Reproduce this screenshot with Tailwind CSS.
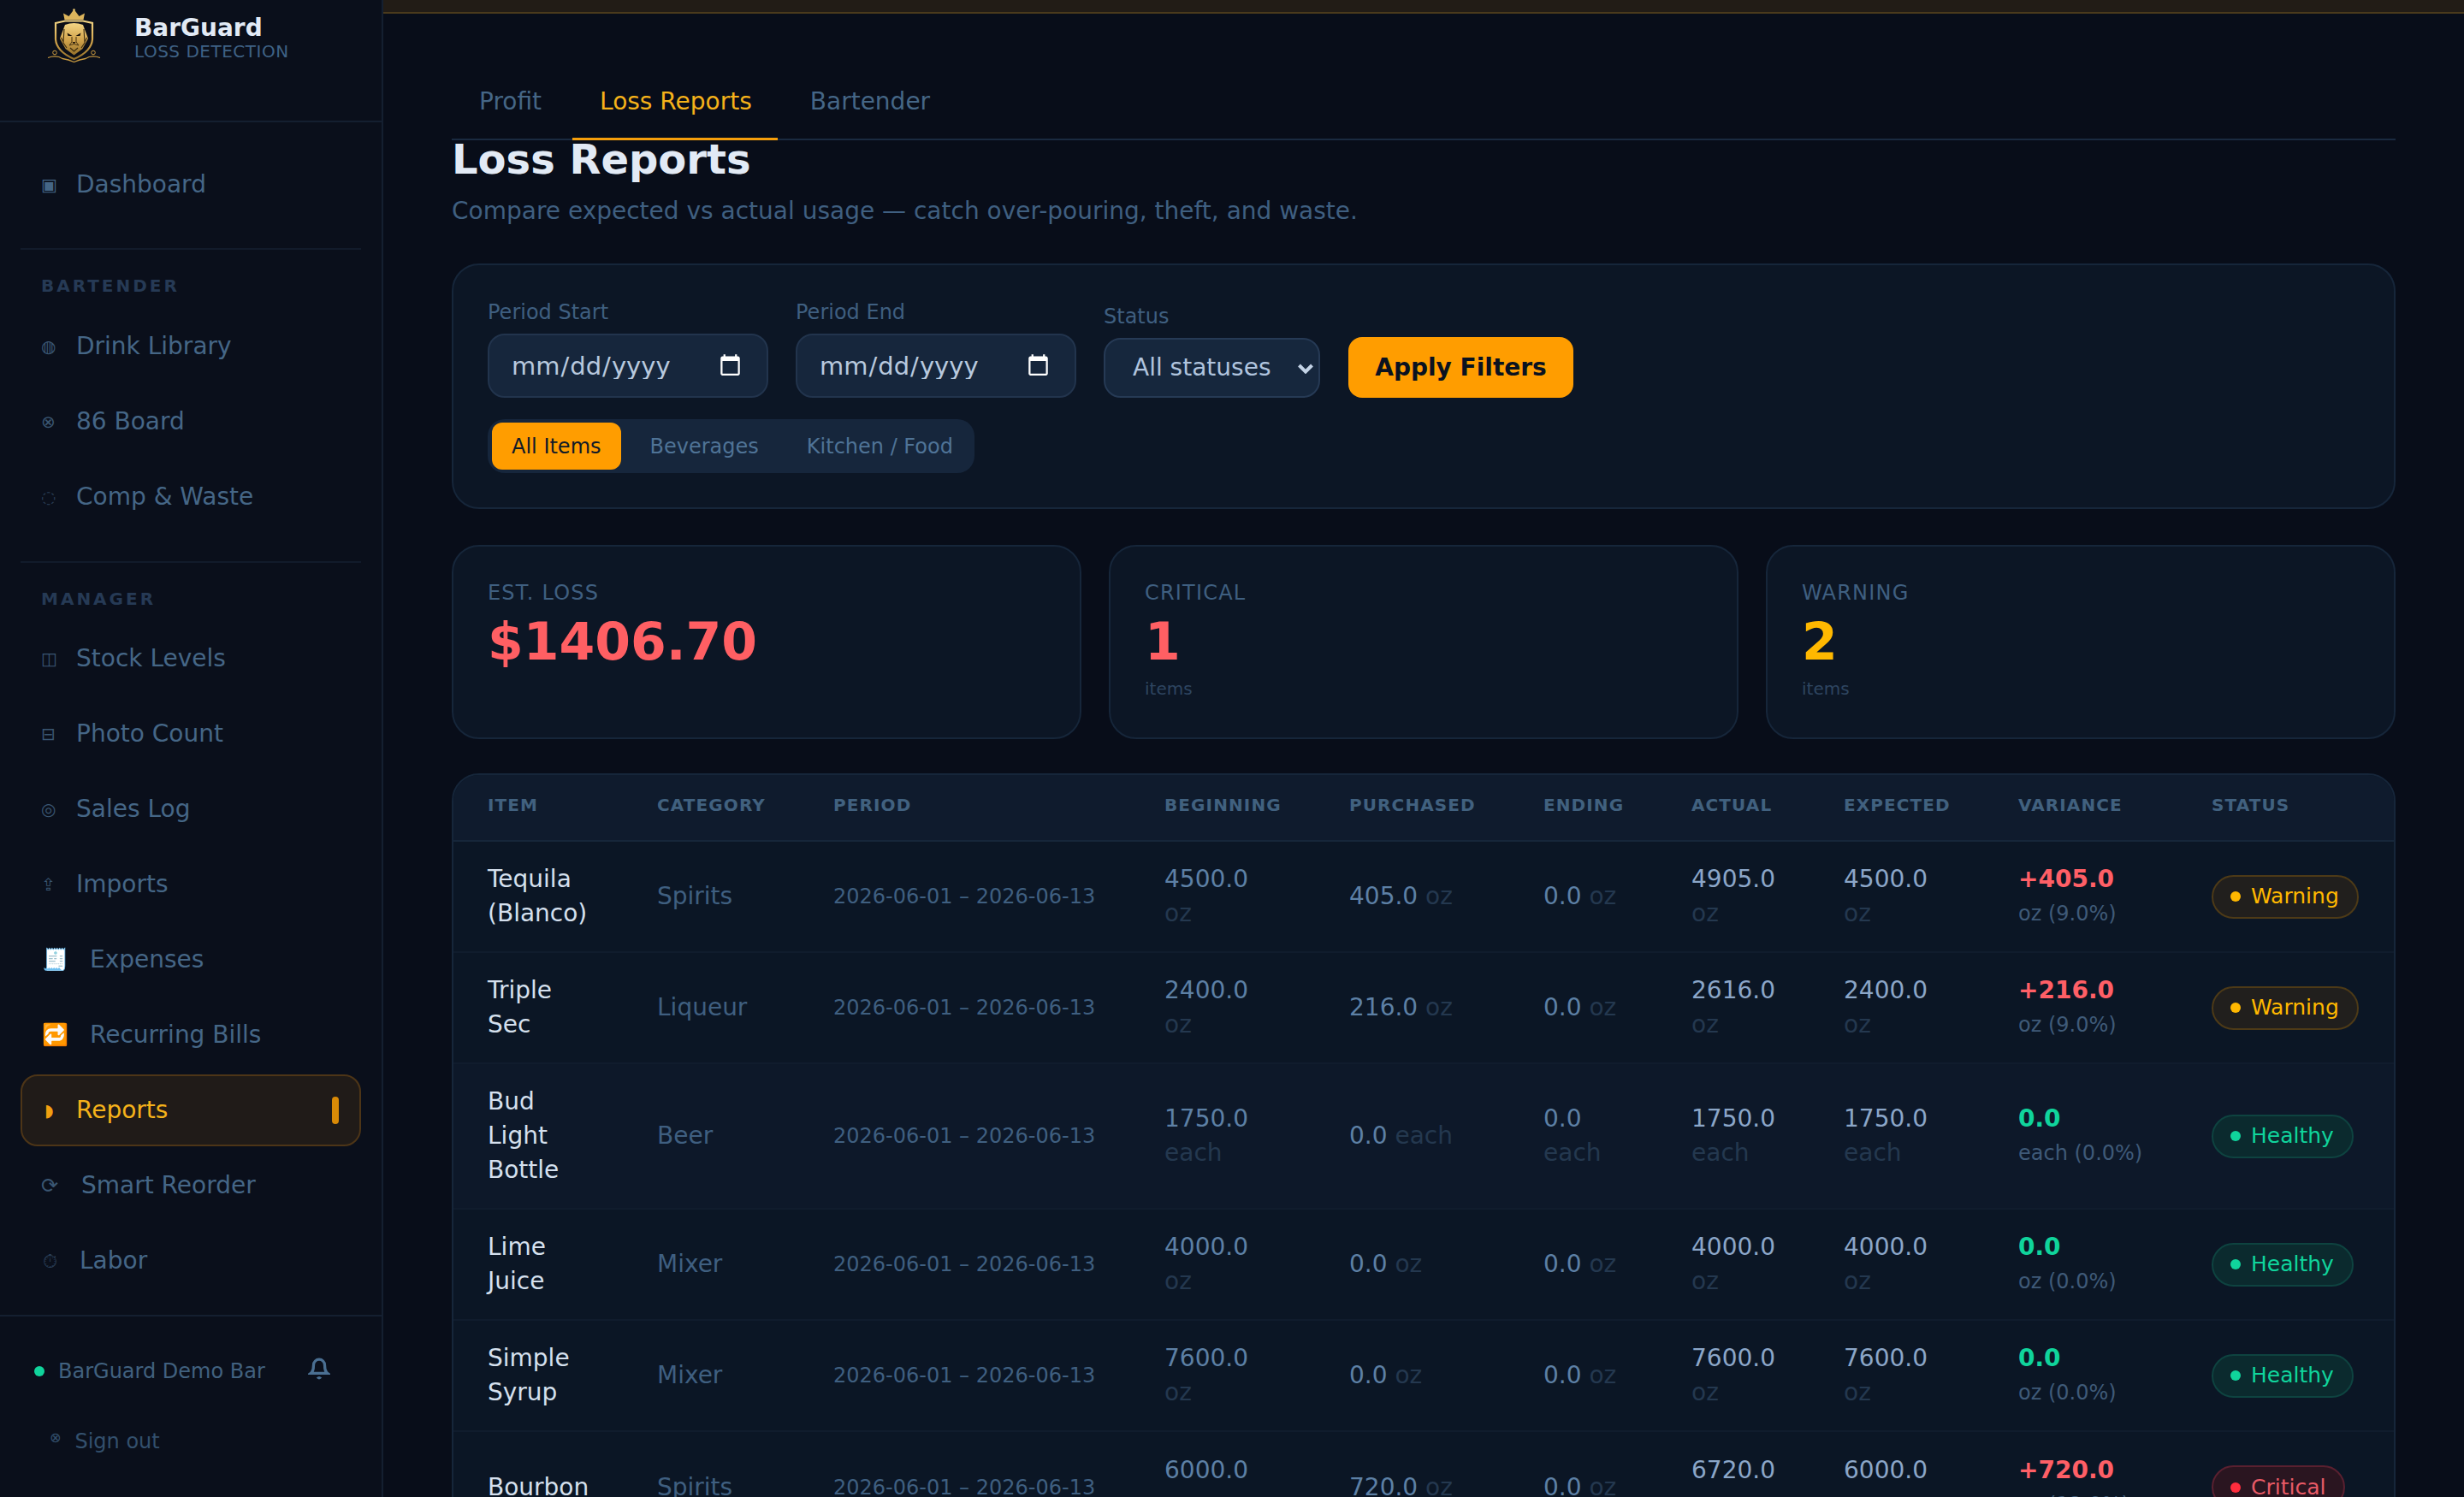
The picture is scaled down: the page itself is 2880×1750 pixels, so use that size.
<!DOCTYPE html>
<html lang="en">
<head>
<meta charset="utf-8">
<title>BarGuard - Loss Reports</title>
<script src="https://cdn.jsdelivr.net/npm/@tailwindcss/browser@4"></script>
</head>
<body class="font-['DejaVu_Sans',sans-serif] bg-[#080d19] text-[#e2eaf5] h-[1750px] w-[2880px] overflow-hidden flex">

<aside class="w-[448px] h-[1750px] shrink-0 bg-[#0a0f1b] border-r-2 border-[#141f30] flex flex-col">
  <div class="h-[143px] border-b-2 border-[#141f30] flex items-start shrink-0">
    <svg class="ml-[55px] mt-[10px] w-[63px] h-[64px] shrink-0" viewBox="55 10 63 64">
      <defs><linearGradient id="g" x1="0" y1="0" x2="0" y2="1"><stop offset="0" stop-color="#f3d584"/><stop offset="0.55" stop-color="#d0a24a"/><stop offset="1" stop-color="#94702a"/></linearGradient></defs>
      <path d="M75.500 23 L74 15.500 L80.500 19 L86.500 11 L92.500 19 L99 15.500 L97.500 23 Z" fill="#dcb45c"/>
      <circle cx="86.500" cy="11.500" r="1.300" fill="#e8c670"/>
      <path d="M65 27 L76 24.500 L97 24.500 L108 27 L108 46 Q107 60 86.500 69 Q66 60 65 46 Z" fill="#0b0e17" stroke="url(#g)" stroke-width="2.200"/>
      <path d="M76 29 Q86.500 25 97 29 L103 45 L96.500 57 L86.500 64.500 L76.500 57 L70 45 Z" fill="url(#g)"/>
      <path d="M75 34 L74 50 L78 56 M98 34 L99 50 L95 56 M71.500 44 L74 49 M101.500 44 L99 49" stroke="#3d2d10" stroke-width="1.100" fill="none"/>
      <path d="M78.500 38.500 L84.500 42 L79.500 42 Z M94.500 38.500 L88.500 42 L93.500 42 Z" fill="#1a1207"/>
      <path d="M84 43 L84 49 L81 53 L86.500 51.500 L92 53 L89 49 L89 43" stroke="#4a3614" stroke-width="1" fill="none"/>
      <path d="M84.500 49 L88.500 49 L86.500 51.500 Z" fill="#1a1207"/>
      <path d="M82 56 L86.500 60 L91 56" stroke="#3d2d10" stroke-width="1.200" fill="none"/>
      <path d="M56 67.500 Q66 64 73 68.500 Q80 69.500 86.500 72.500 Q93 69.500 100 68.500 Q107 64 117 67.500" stroke="#c99a40" stroke-width="1.300" fill="none"/>
      <circle cx="64" cy="61.500" r="2.300" fill="none" stroke="#c99a40" stroke-width="1"/>
      <circle cx="109" cy="61.500" r="2.300" fill="none" stroke="#c99a40" stroke-width="1"/>
    </svg>
    <div class="ml-[39px] pt-[17px] flex flex-col">
      <span class="font-bold text-[28px] leading-[32px] text-[#e2eaf5]">BarGuard</span>
      <span class="text-[20px] leading-[22px] tracking-[0.500px] text-[#3f6285]">LOSS DETECTION</span>
    </div>
  </div>

  <nav class="flex-1 px-[24px] pt-[31px] flex flex-col text-[28px] text-[#456686]">
    <a class="h-[84px] flex items-center gap-[21px] px-[24px] shrink-0"><span class="w-[20px] text-[20px] text-[#456686]">▣</span>Dashboard</a>

    <div class="h-[2px] bg-[#121b2b] mt-[32px] mb-[28px] shrink-0"></div>
    <div class="h-[28px] pl-[24px] text-[20px] leading-[28px] font-bold tracking-[3px] text-[#263a55] mb-[15px] shrink-0">BARTENDER</div>
    <div class="flex flex-col gap-[4px]">
      <a class="h-[84px] flex items-center gap-[21px] px-[24px]"><span class="w-[20px] text-[20px] text-[#3a5672]">◍</span>Drink Library</a>
      <a class="h-[84px] flex items-center gap-[21px] px-[24px]"><span class="w-[20px] text-[20px] text-[#3a5672]">⊗</span>86 Board</a>
      <a class="h-[84px] flex items-center gap-[21px] px-[24px]"><span class="w-[20px] text-[20px] text-[#2a3f58]">◌</span>Comp &amp; Waste</a>
    </div>

    <div class="h-[2px] bg-[#121b2b] mt-[33px] mb-[28px] shrink-0"></div>
    <div class="h-[28px] pl-[24px] text-[20px] leading-[28px] font-bold tracking-[3px] text-[#263a55] mb-[14px] shrink-0">MANAGER</div>
    <div class="flex flex-col gap-[4px]">
      <a class="h-[84px] flex items-center gap-[21px] px-[24px]"><span class="w-[20px] text-[20px] text-[#3a5672]">◫</span>Stock Levels</a>
      <a class="h-[84px] flex items-center gap-[21px] px-[24px]"><span class="w-[20px] text-[20px] text-[#3a5672]">⊟</span>Photo Count</a>
      <a class="h-[84px] flex items-center gap-[21px] px-[24px]"><span class="w-[20px] text-[20px] text-[#3a5672]">◎</span>Sales Log</a>
      <a class="h-[84px] flex items-center gap-[21px] px-[24px]"><span class="w-[20px] text-[20px] text-[#3a5672]">⇪</span>Imports</a>
      <a class="h-[84px] flex items-center gap-[21px] px-[24px]"><span class="w-[36px] pl-[1px] text-[25px]">🧾</span>Expenses</a>
      <a class="h-[84px] flex items-center gap-[21px] px-[24px]"><span class="w-[36px] pl-[1px] text-[25px]">🔁</span>Recurring Bills</a>
      <a class="h-[84px] flex items-center gap-[21px] px-[22px] text-[#f5b21a] bg-[#201b18] border-2 border-[#4d3517] rounded-[20px]"><span class="w-[20px] pl-[4px] text-[20px] text-[#f0a010]">◗</span>Reports<span class="ml-auto w-[8px] h-[32px] rounded-[4px] bg-[#d98a06] mr-[2px]"></span></a>
      <a class="h-[84px] flex items-center gap-[21px] px-[24px]"><span class="w-[26px] text-[24px] text-[#3a5672]">⟳</span>Smart Reorder</a>
      <a class="h-[84px] flex items-center gap-[21px] px-[24px]"><span class="w-[24px] pl-[2px] text-[22px] text-[#2a3f58]">⏱</span>Labor</a>
    </div>
  </nav>

  <div class="h-[213px] border-t-2 border-[#141f30] shrink-0 flex flex-col">
    <div class="flex items-center pl-[40px] pt-[48px] h-[80px] text-[24px] text-[#41617f]">
      <span class="w-[12px] h-[12px] rounded-full bg-[#10d49c]"></span>
      <span class="ml-[16px]">BarGuard Demo Bar</span>
      <svg class="ml-[50px] w-[26px] h-[26px] mt-[-6px]" viewBox="0 0 24 24" fill="none" stroke="#4a6f92" stroke-width="3"><path d="M18 8a6 6 0 0 0-12 0c0 7-3 9-3 9h18s-3-2-3-9"/><path d="M13.700 21a2 2 0 0 1-3.400 0"/></svg>
    </div>
    <div class="flex items-center gap-[16px] pl-[58px] mt-[48px] text-[24px] text-[#33506d]"><span class="text-[16px] -mt-[8px]">⊗</span>Sign out</div>
  </div>
</aside>

<main class="flex-1 min-w-0 flex flex-col h-[1750px] overflow-hidden">
  <div class="h-[16px] shrink-0 bg-[#221c16] border-b-2 border-[#4a3a1c]"></div>
  <div class="px-[80px] pt-[62px] flex flex-col">
    <div class="flex gap-[4px] border-b-2 border-[#1a2a40] h-[86px] text-[28px] text-[#456686]">
      <div class="px-[32px] pt-[20px] h-[86px]">Profit</div>
      <div class="pl-[32px] pr-[30px] pt-[20px] h-[86px] whitespace-nowrap text-[#f5b21a] border-b-[3px] border-[#f59e0b]">Loss Reports</div>
      <div class="pl-[34px] pr-[32px] pt-[20px] h-[86px]">Bartender</div>
    </div>
    <h1 class="text-[48px] leading-[48px] -mt-[2px] font-bold text-[#e2eaf5]">Loss Reports</h1>
    <p class="text-[28px] leading-[40px] mt-[17px] text-[#3f5f80]">Compare expected vs actual usage — catch over-pouring, theft, and waste.</p>

    <section class="mt-[41px] h-[287px] rounded-[32px] border-2 border-[#16263a] bg-[#0c1625] px-[40px] pt-[40px] flex flex-col gap-[25px]">
      <div class="flex items-end gap-[32px] h-[115px] shrink-0">
        <label class="flex flex-col gap-[10px] text-[24px] leading-[30px] text-[#3f5f80]">Period Start
          <input type="date" class="w-[328px] h-[75px] rounded-[20px] bg-[#16263c] border-2 border-[#22344d] pl-[25px] pr-[26px] text-[29px] text-[#b8c9de] [color-scheme:dark]">
        </label>
        <label class="flex flex-col gap-[10px] text-[24px] leading-[30px] text-[#3f5f80]">Period End
          <input type="date" class="w-[328px] h-[75px] rounded-[20px] bg-[#16263c] border-2 border-[#22344d] pl-[25px] pr-[26px] text-[29px] text-[#b8c9de] [color-scheme:dark]">
        </label>
        <label class="flex flex-col gap-[10px] text-[24px] leading-[30px] text-[#3f5f80]">Status
          <span class="relative block w-[253px] h-[70px]">
            <select class="appearance-none w-[253px] h-[70px] rounded-[20px] bg-[#16273d] border-2 border-[#263a55] pl-[32px] text-[28px] text-[#b0c4de]"><option>All statuses</option></select>
            <svg class="absolute left-[227px] top-[30px] w-[18px] h-[12px] pointer-events-none" viewBox="0 0 18 12" fill="none" stroke="#c3d3e6" stroke-width="4"><path d="M1.500 2 L9 9.500 L16.500 2"/></svg>
          </span>
        </label>
        <button class="w-[263px] h-[71px] ml-[1px] rounded-[16px] bg-[#ff9d00] text-[#0a1220] font-bold text-[28px]">Apply Filters</button>
      </div>
      <div class="self-start w-[569px] h-[63px] flex items-center gap-[10px] bg-[#16263c] rounded-[20px] px-[5px] text-[24px] text-[#4f7396] whitespace-nowrap">
        <span class="h-[55px] px-[23px] flex items-center rounded-[12px] bg-[#ff9d00] text-[#101a28]">All Items</span>
        <span class="h-[55px] pl-[24px] pr-[22px] flex items-center">Beverages</span>
        <span class="h-[55px] px-[24px] flex items-center">Kitchen / Food</span>
      </div>
    </section>

    <section class="mt-[42px] grid grid-cols-3 gap-[32px]">
      <div class="h-[227px] rounded-[32px] border-2 border-[#16263a] bg-[#0c1625] px-[40px] pt-[39px]">
        <div class="text-[24px] leading-[30px] tracking-[1.200px] text-[#3f5f80]">EST. LOSS</div>
        <div class="text-[60px] leading-[72px] mt-[6px] font-bold text-[#ff5f63]">$1406.70</div>
      </div>
      <div class="h-[227px] rounded-[32px] border-2 border-[#16263a] bg-[#0c1625] px-[40px] pt-[39px]">
        <div class="text-[24px] leading-[30px] tracking-[1.200px] text-[#3f5f80]">CRITICAL</div>
        <div class="text-[60px] leading-[72px] mt-[6px] font-bold text-[#ff5f63]">1</div>
        <div class="text-[20px] leading-[26px] mt-[6px] text-[#2e4560]">items</div>
      </div>
      <div class="h-[227px] rounded-[32px] border-2 border-[#16263a] bg-[#0c1625] px-[40px] pt-[39px]">
        <div class="text-[24px] leading-[30px] tracking-[1.200px] text-[#3f5f80]">WARNING</div>
        <div class="text-[60px] leading-[72px] mt-[6px] font-bold text-[#ffb800]">2</div>
        <div class="text-[20px] leading-[26px] mt-[6px] text-[#2e4560]">items</div>
      </div>
    </section>

    <section class="mt-[40px] rounded-t-[32px] border-2 border-[#16263a] bg-[#0b1625] overflow-hidden">
      <table class="w-[2268px] table-fixed border-collapse text-[28px] leading-[40px]">
        <colgroup>
          <col class="w-[198px]"><col class="w-[206px]"><col class="w-[387px]"><col class="w-[216px]"><col class="w-[227px]"><col class="w-[173px]"><col class="w-[178px]"><col class="w-[204px]"><col class="w-[226px]"><col class="w-[253px]">
        </colgroup>
        <thead>
          <tr class="h-[77px] bg-[#0f1b2d] border-b-2 border-[#16263a] text-left text-[20px] tracking-[1.100px] text-[#41617f]">
            <th class="pl-[40px] pb-[6px] font-bold">ITEM</th><th class="pl-[40px] pb-[6px] font-bold">CATEGORY</th><th class="pl-[40px] pb-[6px] font-bold">PERIOD</th><th class="pl-[40px] pb-[6px] font-bold">BEGINNING</th><th class="pl-[40px] pb-[6px] font-bold">PURCHASED</th><th class="pl-[40px] pb-[6px] font-bold">ENDING</th><th class="pl-[40px] pb-[6px] font-bold">ACTUAL</th><th class="pl-[40px] pb-[6px] font-bold">EXPECTED</th><th class="pl-[40px] pb-[6px] font-bold">VARIANCE</th><th class="pl-[40px] pb-[6px] font-bold">STATUS</th>
          </tr>
        </thead>
        <tbody>
          <tr class="h-[130px] border-b-2 border-[#101c2d]">
            <td class="px-[40px] py-[24px] text-[#d5e0ee]">Tequila (Blanco)</td>
            <td class="px-[40px] text-[#3f5f80]">Spirits</td>
            <td class="pl-[40px] text-[24px] text-[#3f5f80]">2026-06-01 – 2026-06-13</td>
            <td class="px-[40px] text-[#5d80a5]">4500.0 <span class="text-[#24384f]">oz</span></td>
            <td class="px-[40px] text-[#5d80a5]">405.0 <span class="text-[#24384f]">oz</span></td>
            <td class="px-[40px] text-[#5d80a5]">0.0 <span class="text-[#24384f]">oz</span></td>
            <td class="px-[40px] text-[#8ba6c8]">4905.0 <span class="text-[#24384f]">oz</span></td>
            <td class="px-[40px] text-[#8ba6c8]">4500.0 <span class="text-[#24384f]">oz</span></td>
            <td class="pl-[40px]"><div class="font-bold text-[#ff5f66]">+405.0</div><div class="text-[24px] text-[#3f5a78]">oz (9.0%)</div></td>
            <td class="pl-[40px]"><span class="inline-flex items-center gap-[12px] h-[51px] pl-[20px] pr-[21px] rounded-full border-2 border-[#4d3a17] bg-[#211f1d] text-[25px] text-[#ffb800]"><i class="w-[12px] h-[12px] rounded-full bg-[#ffb800]"></i>Warning</span></td>
          </tr>
          <tr class="h-[130px] border-b-2 border-[#101c2d]">
            <td class="px-[40px] py-[24px] text-[#d5e0ee]">Triple Sec</td>
            <td class="px-[40px] text-[#3f5f80]">Liqueur</td>
            <td class="pl-[40px] text-[24px] text-[#3f5f80]">2026-06-01 – 2026-06-13</td>
            <td class="px-[40px] text-[#5d80a5]">2400.0 <span class="text-[#24384f]">oz</span></td>
            <td class="px-[40px] text-[#5d80a5]">216.0 <span class="text-[#24384f]">oz</span></td>
            <td class="px-[40px] text-[#5d80a5]">0.0 <span class="text-[#24384f]">oz</span></td>
            <td class="px-[40px] text-[#8ba6c8]">2616.0 <span class="text-[#24384f]">oz</span></td>
            <td class="px-[40px] text-[#8ba6c8]">2400.0 <span class="text-[#24384f]">oz</span></td>
            <td class="pl-[40px]"><div class="font-bold text-[#ff5f66]">+216.0</div><div class="text-[24px] text-[#3f5a78]">oz (9.0%)</div></td>
            <td class="pl-[40px]"><span class="inline-flex items-center gap-[12px] h-[51px] pl-[20px] pr-[21px] rounded-full border-2 border-[#4d3a17] bg-[#211f1d] text-[25px] text-[#ffb800]"><i class="w-[12px] h-[12px] rounded-full bg-[#ffb800]"></i>Warning</span></td>
          </tr>
          <tr class="h-[130px] border-b-2 border-[#101c2d] bg-[#0d1829]">
            <td class="px-[40px] py-[24px] text-[#d5e0ee]">Bud Light Bottle</td>
            <td class="px-[40px] text-[#3f5f80]">Beer</td>
            <td class="pl-[40px] text-[24px] text-[#3f5f80]">2026-06-01 – 2026-06-13</td>
            <td class="px-[40px] text-[#5d80a5]">1750.0 <span class="text-[#24384f]">each</span></td>
            <td class="px-[40px] text-[#5d80a5]">0.0 <span class="text-[#24384f]">each</span></td>
            <td class="px-[40px] text-[#5d80a5]">0.0 <span class="text-[#24384f]">each</span></td>
            <td class="px-[40px] text-[#8ba6c8]">1750.0 <span class="text-[#24384f]">each</span></td>
            <td class="px-[40px] text-[#8ba6c8]">1750.0 <span class="text-[#24384f]">each</span></td>
            <td class="pl-[40px]"><div class="font-bold text-[#10d49c]">0.0</div><div class="text-[24px] text-[#3f5a78]">each (0.0%)</div></td>
            <td class="pl-[40px]"><span class="inline-flex items-center gap-[12px] h-[51px] pl-[20px] pr-[21px] rounded-full border-2 border-[#0e4340] bg-[#0b2a2e] text-[25px] text-[#10d49c]"><i class="w-[12px] h-[12px] rounded-full bg-[#10d49c]"></i>Healthy</span></td>
          </tr>
          <tr class="h-[130px] border-b-2 border-[#101c2d]">
            <td class="px-[40px] py-[24px] text-[#d5e0ee]">Lime Juice</td>
            <td class="px-[40px] text-[#3f5f80]">Mixer</td>
            <td class="pl-[40px] text-[24px] text-[#3f5f80]">2026-06-01 – 2026-06-13</td>
            <td class="px-[40px] text-[#5d80a5]">4000.0 <span class="text-[#24384f]">oz</span></td>
            <td class="px-[40px] text-[#5d80a5]">0.0 <span class="text-[#24384f]">oz</span></td>
            <td class="px-[40px] text-[#5d80a5]">0.0 <span class="text-[#24384f]">oz</span></td>
            <td class="px-[40px] text-[#8ba6c8]">4000.0 <span class="text-[#24384f]">oz</span></td>
            <td class="px-[40px] text-[#8ba6c8]">4000.0 <span class="text-[#24384f]">oz</span></td>
            <td class="pl-[40px]"><div class="font-bold text-[#10d49c]">0.0</div><div class="text-[24px] text-[#3f5a78]">oz (0.0%)</div></td>
            <td class="pl-[40px]"><span class="inline-flex items-center gap-[12px] h-[51px] pl-[20px] pr-[21px] rounded-full border-2 border-[#0e4340] bg-[#0b2a2e] text-[25px] text-[#10d49c]"><i class="w-[12px] h-[12px] rounded-full bg-[#10d49c]"></i>Healthy</span></td>
          </tr>
          <tr class="h-[130px] border-b-2 border-[#101c2d]">
            <td class="px-[40px] py-[24px] text-[#d5e0ee]">Simple Syrup</td>
            <td class="px-[40px] text-[#3f5f80]">Mixer</td>
            <td class="pl-[40px] text-[24px] text-[#3f5f80]">2026-06-01 – 2026-06-13</td>
            <td class="px-[40px] text-[#5d80a5]">7600.0 <span class="text-[#24384f]">oz</span></td>
            <td class="px-[40px] text-[#5d80a5]">0.0 <span class="text-[#24384f]">oz</span></td>
            <td class="px-[40px] text-[#5d80a5]">0.0 <span class="text-[#24384f]">oz</span></td>
            <td class="px-[40px] text-[#8ba6c8]">7600.0 <span class="text-[#24384f]">oz</span></td>
            <td class="px-[40px] text-[#8ba6c8]">7600.0 <span class="text-[#24384f]">oz</span></td>
            <td class="pl-[40px]"><div class="font-bold text-[#10d49c]">0.0</div><div class="text-[24px] text-[#3f5a78]">oz (0.0%)</div></td>
            <td class="pl-[40px]"><span class="inline-flex items-center gap-[12px] h-[51px] pl-[20px] pr-[21px] rounded-full border-2 border-[#0e4340] bg-[#0b2a2e] text-[25px] text-[#10d49c]"><i class="w-[12px] h-[12px] rounded-full bg-[#10d49c]"></i>Healthy</span></td>
          </tr>
          <tr class="h-[130px]">
            <td class="px-[40px] py-[24px] text-[#d5e0ee]">Bourbon</td>
            <td class="px-[40px] text-[#3f5f80]">Spirits</td>
            <td class="pl-[40px] text-[24px] text-[#3f5f80]">2026-06-01 – 2026-06-13</td>
            <td class="px-[40px] text-[#5d80a5]">6000.0 <span class="text-[#24384f]">oz</span></td>
            <td class="px-[40px] text-[#5d80a5]">720.0 <span class="text-[#24384f]">oz</span></td>
            <td class="px-[40px] text-[#5d80a5]">0.0 <span class="text-[#24384f]">oz</span></td>
            <td class="px-[40px] text-[#8ba6c8]">6720.0 <span class="text-[#24384f]">oz</span></td>
            <td class="px-[40px] text-[#8ba6c8]">6000.0 <span class="text-[#24384f]">oz</span></td>
            <td class="pl-[40px]"><div class="font-bold text-[#ff5f66]">+720.0</div><div class="text-[24px] text-[#3f5a78]">oz (12.0%)</div></td>
            <td class="pl-[40px]"><span class="inline-flex items-center gap-[12px] h-[51px] pl-[20px] pr-[21px] rounded-full border-2 border-[#5a2030] bg-[#2a1520] text-[25px] text-[#e85a66]"><i class="w-[12px] h-[12px] rounded-full bg-[#ff2d3d]"></i>Critical</span></td>
          </tr>
        </tbody>
      </table>
    </section>
  </div>
</main>
</body>
</html>
